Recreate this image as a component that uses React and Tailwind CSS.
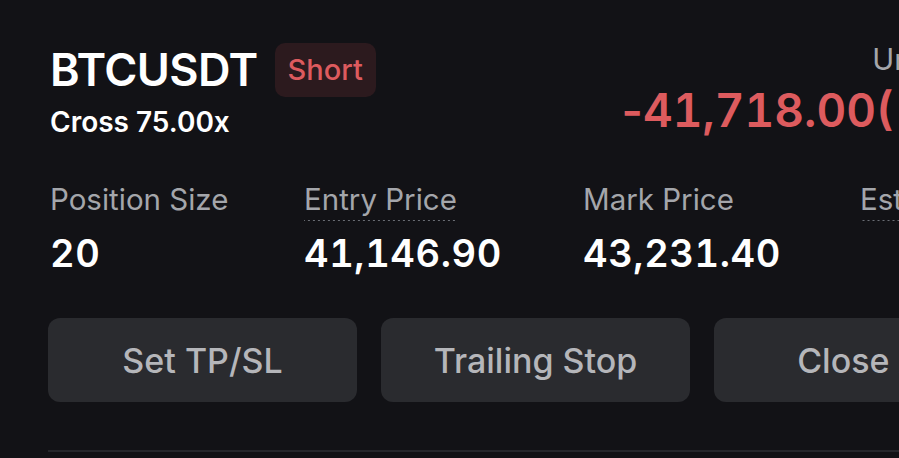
import React from 'react';

const stats = [
  { label: 'Position Size', value: '20', w: 'w-[254px]' },
  { label: 'Entry Price', value: '41,146.90', w: 'w-[279px]', dotted: true },
  { label: 'Mark Price', value: '43,231.40', w: 'w-[277px]' },
  { label: 'Est. Liq. Price', value: '', w: 'w-[260px]', dotted: true },
];

const actions = ['Set TP/SL', 'Trailing Stop', 'Close All'];

export default function App() {
  return (
    <div className="w-[899px] h-[458px] overflow-hidden bg-[#121216] font-['Inter',sans-serif]">
      <div className="w-[975px] ml-[48px] pt-[43px]">
        <div className="flex justify-between items-start w-[1150px]">
          <div className="flex flex-col pl-[2px]">
            <div className="flex items-center gap-[17px]">
              <span className="text-[45px] leading-[46px] font-semibold text-white tracking-[-0.6px]">BTCUSDT</span>
              <span className="h-[54px] px-[13px] flex items-center rounded-[10px] bg-[#2c1a1e] text-[29px] font-medium text-[#dd5b5e]">Short</span>
            </div>
            <div className="mt-[11px] text-[28px] leading-[28px] font-semibold text-white">Cross 75.00x</div>
          </div>
          <div className="flex flex-col items-end pt-[1px]">
            <div className="text-[29.5px] leading-[30px] text-[#a4a6ab]">Unrealized PNL (USDT)</div>
            <div className="mt-[13px] pr-[49px] text-[46px] leading-[46px] font-semibold text-[#dd5b5e]">
              <span>-</span>
              <span className="tabular-nums">41,718.00(-361.88%)</span>
            </div>
          </div>
        </div>

        <div className="flex mt-[48px] pl-[2px]">
          {stats.map(s => (
            <div key={s.label} className={`${s.w} shrink-0 flex flex-col items-start`}>
              <div className="h-[38px]">
                <span
                  className={`inline-block text-[29.5px] leading-[30px] text-[#a4a6ab] pb-[7px] ${
                    s.dotted ? 'bg-[linear-gradient(to_right,#6b6e75_50%,transparent_50%)] bg-[length:5px_1px] bg-repeat-x bg-bottom' : ''
                  }`}
                >
                  {s.label}
                </span>
              </div>
              <div className="mt-[12px] h-[38px] text-[38px] leading-[38px] font-semibold tabular-nums tracking-[0.6px] text-white">{s.value}</div>
            </div>
          ))}
        </div>

        <div className="flex gap-[24px] mt-[46px]">
          {actions.map(a => (
            <button
              key={a}
              className="flex-1 h-[84px] rounded-[12px] bg-[#2a2b2f] text-[34px] font-medium text-[#b5b6ba] flex items-center justify-center"
            >
              {a}
            </button>
          ))}
        </div>

        <div className="mt-[48px] h-[2px] bg-[#26272c]" />
      </div>
    </div>
  );
}
